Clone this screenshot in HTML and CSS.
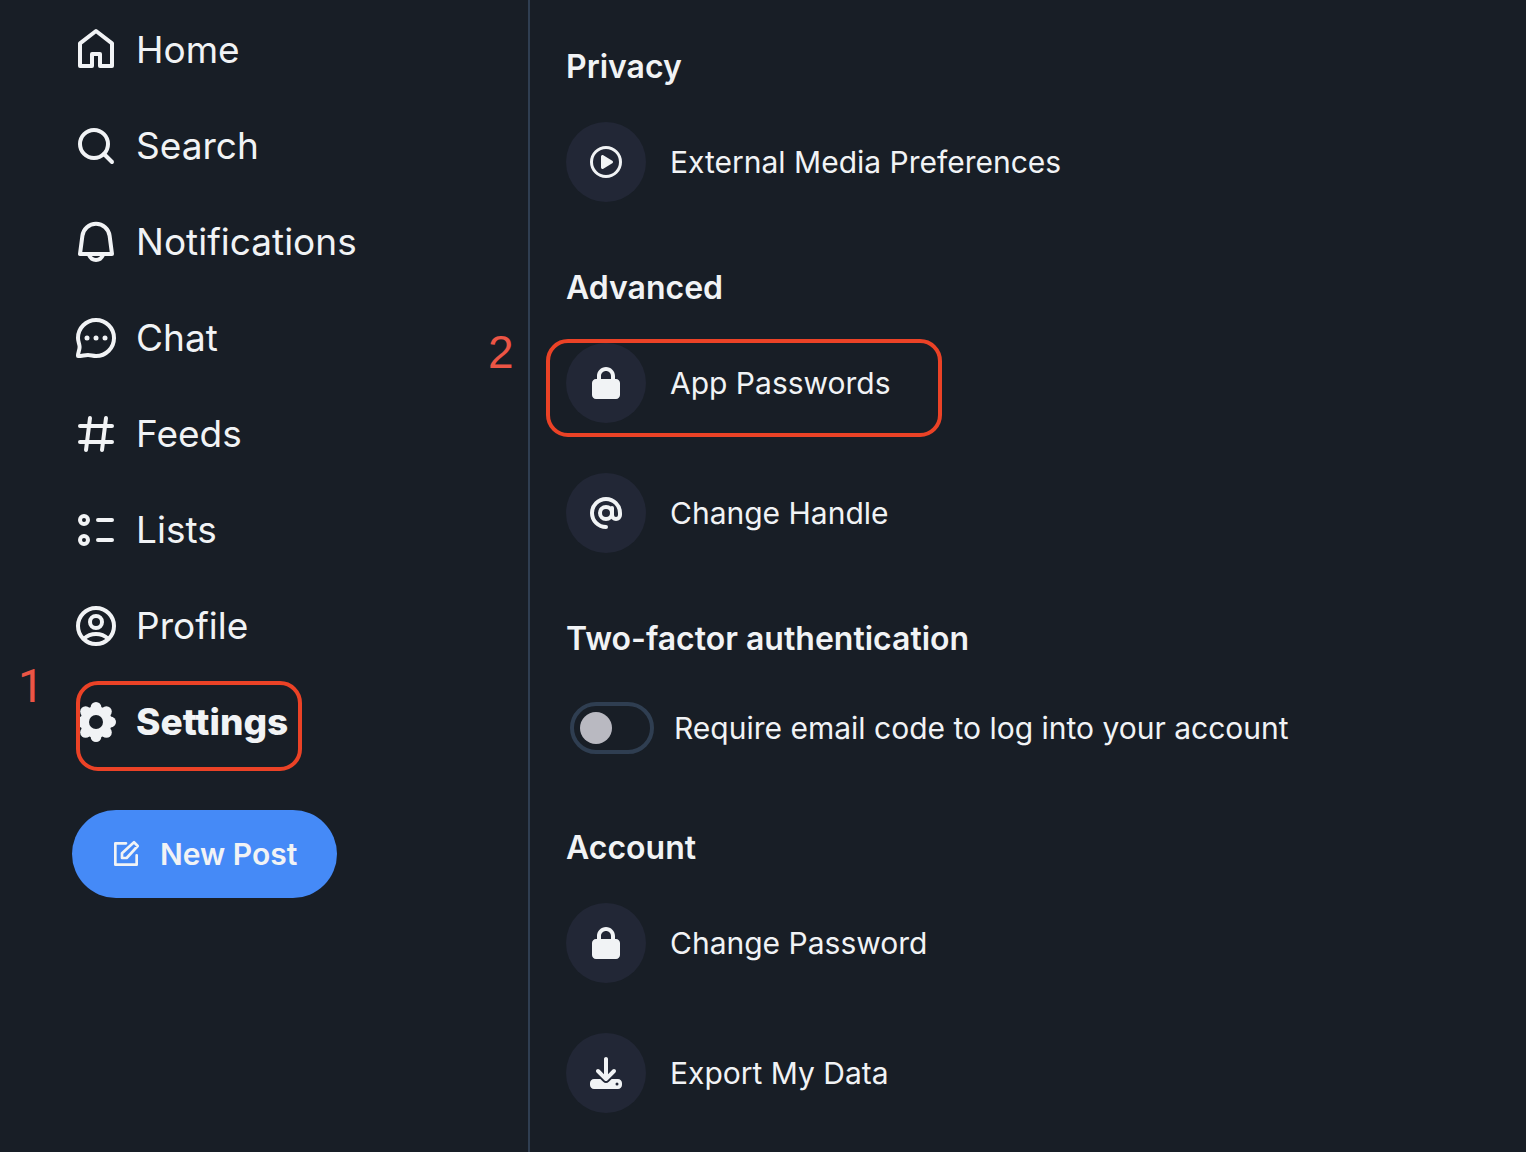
FILE: index.html
```html
<!DOCTYPE html>
<html lang="en">
<head>
<meta charset="utf-8">
<meta name="viewport" content="width=device-width, initial-scale=1">
<title>Settings</title>
<link rel="stylesheet" href="styles.css">
</head>
<body>
<svg class="sprite" aria-hidden="true">
  <symbol id="lock" viewBox="-32 0 512 512"><path d="M144 144v48H304V144c0-44.2-35.8-80-80-80s-80 35.8-80 80zM80 192V144C80 64.5 144.5 0 224 0s144 64.5 144 144v48h16c35.3 0 64 28.7 64 64V448c0 35.3-28.7 64-64 64H64c-35.3 0-64-28.7-64-64V256c0-35.3 28.7-64 64-64H80z"/></symbol>
</svg>
<div class="app">
  <aside class="sidebar">
    <nav aria-label="Main">
      <ul class="nav">
        <li><a class="nav-link" href="#home">
          <svg class="nav-icon" viewBox="0 0 24 24"><path d="M4 8.7 12 2.5l8 6.2V20h-6v-6h-4v6H4z"/></svg>Home</a></li>
        <li><a class="nav-link" href="#search">
          <svg class="nav-icon" viewBox="0 0 24 24"><circle cx="11" cy="11" r="7"/><path d="m16 16 4 4"/></svg>Search</a></li>
        <li><a class="nav-link" href="#notifications">
          <svg class="nav-icon" viewBox="0 0 24 24"><path d="M4 18h16l-1.200-9.100a6.850 6.850 0 0 0-13.600 0zM8.500 18.500C9.200 20.100 10.500 21 12 21s2.800-.9 3.500-2.500"/></svg>Notifications</a></li>
        <li><a class="nav-link" href="#chat">
          <svg class="nav-icon" viewBox="0 0 24 24"><path d="M12 3a9 9 0 1 1 0 18c-1.500 0-2.600-.5-4-.5-1.600 0-3 .5-5 .5 0-1.800.8-3 .8-4.500C3.800 15 3 13.800 3 12a9 9 0 0 1 9-9z"/><g class="solid"><circle cx="7.500" cy="12" r="1.250"/><circle cx="12" cy="12" r="1.250"/><circle cx="16.500" cy="12" r="1.250"/></g></svg>Chat</a></li>
        <li><a class="nav-link" href="#feeds">
          <svg class="nav-icon" viewBox="0 0 24 24"><path d="M4 8h16M4 16h16M9 4 7 20M17 4l-2 16"/></svg>Feeds</a></li>
        <li><a class="nav-link" href="#lists">
          <svg class="nav-icon" viewBox="0 0 24 24"><circle cx="6" cy="7" r="2"/><circle cx="6" cy="17" r="2"/><path d="M13 7h7M13 17h7"/></svg>Lists</a></li>
        <li><a class="nav-link" href="#profile">
          <svg class="nav-icon" viewBox="0 0 24 24"><circle cx="12" cy="12" r="9"/><circle cx="12" cy="10" r="3"/><path d="M6 18.300C7.600 16.800 9.600 16 12 16s4.400.8 6 2.300"/></svg>Profile</a></li>
        <li class="marked"><a class="nav-link current" href="#settings" aria-current="page">
          <svg class="nav-icon" viewBox="0 0 24 24"><g class="solid"><circle cx="12" cy="12" r="7.900"/><circle cx="12" cy="4.700" r="2.700"/><circle cx="17.200" cy="6.800" r="2.700"/><circle cx="19.300" cy="12" r="2.700"/><circle cx="17.200" cy="17.200" r="2.700"/><circle cx="12" cy="19.300" r="2.700"/><circle cx="6.800" cy="17.200" r="2.700"/><circle cx="4.700" cy="12" r="2.700"/><circle cx="6.800" cy="6.800" r="2.700"/></g><circle class="hole" cx="12" cy="12" r="3.500"/></svg>Settings</a>
          <span class="outline outline-nav"></span><span class="step step-nav">1</span></li>
      </ul>
    </nav>
    <button class="new-post" type="button">
      <svg class="post-icon" viewBox="0 0 24 24"><path d="M12 4H4v16h16v-7M9 15v-3.500l9-8.300 2.800 2.800-8.300 9z"/></svg>New Post</button>
  </aside>
  <main class="content">
    <section class="group">
      <h2>Privacy</h2>
      <a class="row" href="#media"><span class="disc"><svg viewBox="0 0 512 512"><path d="M464 256A208 208 0 1 0 48 256a208 208 0 1 0 416 0zM0 256a256 256 0 1 1 512 0A256 256 0 1 1 0 256zM188.3 147.1c7.6-4.2 16.8-4.1 24.3 .5l144 88c7.1 4.4 11.5 12.1 11.5 20.5s-4.4 16.1-11.5 20.5l-144 88c-7.4 4.5-16.7 4.7-24.3 .5s-12.3-12.2-12.3-20.9V168c0-8.7 4.7-16.7 12.3-20.9z"/></svg></span>External Media Preferences</a>
    </section>
    <section class="group">
      <h2>Advanced</h2>
      <div class="rows">
        <div class="marked">
          <a class="row" href="#app-passwords"><span class="disc"><svg><use href="#lock"/></svg></span>App Passwords</a>
          <span class="outline outline-row"></span><span class="step step-row">2</span>
        </div>
        <a class="row" href="#handle"><span class="disc"><svg class="at" viewBox="0 0 32 32"><circle cx="16" cy="16" r="6"/><path d="M22 11v7a4 4 0 0 0 8 0v-2a14 14 0 1 0-14 14"/></svg></span>Change Handle</a>
      </div>
    </section>
    <section class="group">
      <h2>Two-factor authentication</h2>
      <label class="toggle-row"><input class="toggle" type="checkbox" role="switch">Require email code to log into your account</label>
    </section>
    <section class="group">
      <h2>Account</h2>
      <div class="rows">
        <a class="row" href="#password"><span class="disc"><svg><use href="#lock"/></svg></span>Change Password</a>
        <a class="row" href="#export"><span class="disc"><svg viewBox="0 0 512 512"><path d="M288 32c0-17.7-14.3-32-32-32s-32 14.3-32 32V274.700l-73.400-73.400c-12.500-12.500-32.800-12.500-45.300 0s-12.500 32.800 0 45.300l128 128c12.500 12.500 32.800 12.500 45.300 0l128-128c12.500-12.500 12.500-32.800 0-45.300s-32.800-12.500-45.300 0L288 274.700V32zM64 352c-35.300 0-64 28.700-64 64v32c0 35.300 28.700 64 64 64H448c35.300 0 64-28.700 64-64V416c0-35.300-28.700-64-64-64H346.500l-45.300 45.300c-25 25-65.500 25-90.500 0L165.500 352H64zm368 56a24 24 0 1 1 0 48 24 24 0 1 1 0-48z"/></svg></span>Export My Data</a>
      </div>
    </section>
  </main>
</div>
</body>
</html>
```
FILE: styles.css
```css
:root {
  --bg: #181e26;
  --fg: #f1f3f5;
  --line: #2f3e51;
  --disc: #222736;
  --mark: #eb4226;
}
* { box-sizing: border-box; }
body {
  margin: 0;
  background: var(--bg);
  color: var(--fg);
  font-family: Inter, "Liberation Sans", sans-serif;
  font-size: 30px;
  line-height: 40px;
}
a { color: inherit; text-decoration: none; }
.sprite { position: absolute; width: 0; height: 0; }
.app { display: flex; min-height: 100vh; }

.sidebar {
  flex: 0 1 530px;
  padding: 26px 24px 24px 72px;
  border-right: 2px solid var(--line);
}
.nav {
  display: flex;
  flex-direction: column;
  align-items: flex-start;
  gap: 48px;
  margin: 0 0 64px;
  padding: 0;
  list-style: none;
}
.nav-link {
  display: flex;
  align-items: center;
  gap: 16px;
  font-size: 37px;
  line-height: 48px;
}
.current { font-weight: 800; }
.nav-icon {
  width: 48px;
  height: 48px;
  fill: none;
  stroke: currentColor;
  stroke-width: 2;
  stroke-linecap: round;
  stroke-linejoin: round;
}
.solid { fill: currentColor; stroke: none; }
.hole { fill: var(--bg); stroke: none; }

.new-post {
  display: flex;
  align-items: center;
  gap: 18px;
  height: 88px;
  padding: 0 40px 0 38px;
  border: 0;
  border-radius: 44px;
  background: #458af7;
  color: var(--fg);
  font: 600 30px/40px Inter, "Liberation Sans", sans-serif;
}
.post-icon {
  width: 32px;
  height: 32px;
  fill: none;
  stroke: currentColor;
  stroke-width: 2;
  stroke-linejoin: round;
  stroke-linecap: round;
}

.content {
  flex: 1;
  display: flex;
  flex-direction: column;
  gap: 66px;
  padding: 47px 36px 39px;
}
.group { display: flex; flex-direction: column; gap: 35px; }
h2 { margin: 0; font-size: 32px; font-weight: 600; line-height: 40px; }
.rows { display: flex; flex-direction: column; gap: 50px; }
.row { display: flex; align-items: center; gap: 24px; }
.disc {
  display: grid;
  place-items: center;
  width: 80px;
  height: 80px;
  border-radius: 50%;
  background: var(--disc);
}
.disc svg { width: 32px; height: 32px; fill: currentColor; }
.disc .at { fill: none; stroke: currentColor; stroke-width: 4; stroke-linecap: round; }

.toggle-row {
  display: flex;
  align-items: center;
  gap: 20px;
  min-height: 68px;
  padding-left: 4px;
}
.toggle {
  appearance: none;
  flex: none;
  width: 84px;
  height: 52px;
  margin: 0;
  padding: 6px;
  border: 4px solid var(--line);
  border-radius: 26px;
}
.toggle::before {
  content: "";
  display: block;
  width: 32px;
  height: 32px;
  border-radius: 50%;
  background: #b9b9c1;
}
.toggle:checked::before { margin-left: auto; }

/* Walkthrough marks drawn over the interface */
.marked { position: relative; }
.outline {
  position: absolute;
  border: 4px solid var(--mark);
  border-radius: 22px;
  pointer-events: none;
}
.outline-nav { top: -17px; left: 4px; width: 226px; height: 90px; }
.outline-row { top: -4px; left: -20px; width: 396px; height: 98px; }
.step {
  position: absolute;
  color: #ec5545;
  font-family: "Liberation Sans", sans-serif;
  font-size: 46px;
  line-height: 48px;
}
.step-nav { top: -36px; left: -54px; font-family: Roboto, sans-serif; }
.step-row { top: -15px; left: -78px; }
```
